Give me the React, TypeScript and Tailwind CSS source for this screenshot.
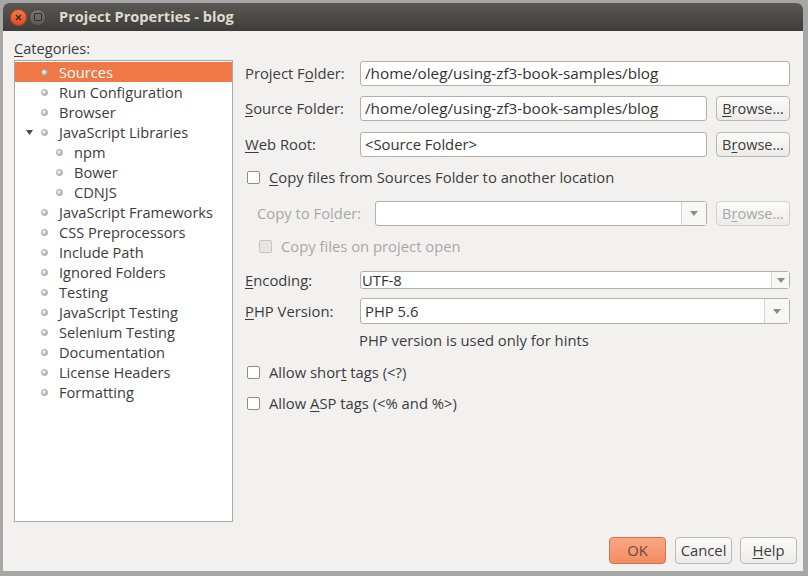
import React from 'react'

const font = { fontFamily: '"Open Sans", "DejaVu Sans", sans-serif' }

function Bullet() {
  return <span className="inline-block w-[7px] h-[7px] rounded-full bg-[radial-gradient(circle_at_35%_35%,#ffffff,#b5b5b5_70%,#959595)] border border-[#a3a3a3]" />
}

interface Cat {
  label: string
  level: number
  expander?: boolean
  selected?: boolean
}

const cats: Cat[] = [
  { label: 'Sources', level: 1, selected: true },
  { label: 'Run Configuration', level: 1 },
  { label: 'Browser', level: 1 },
  { label: 'JavaScript Libraries', level: 1, expander: true },
  { label: 'npm', level: 2 },
  { label: 'Bower', level: 2 },
  { label: 'CDNJS', level: 2 },
  { label: 'JavaScript Frameworks', level: 1 },
  { label: 'CSS Preprocessors', level: 1 },
  { label: 'Include Path', level: 1 },
  { label: 'Ignored Folders', level: 1 },
  { label: 'Testing', level: 1 },
  { label: 'JavaScript Testing', level: 1 },
  { label: 'Selenium Testing', level: 1 },
  { label: 'Documentation', level: 1 },
  { label: 'License Headers', level: 1 },
  { label: 'Formatting', level: 1 },
]

function U({ children }: { children: React.ReactNode }) {
  return <span className="underline underline-offset-2">{children}</span>
}

function BrowseBtn({ disabled, mn }: { disabled?: boolean; mn: 'B' | 'r' }) {
  return (
    <button
      className={
        'w-[74px] h-[25px] ml-[9px] rounded-[4px] border bg-gradient-to-b from-[#fbfbfa] to-[#ecebe9] text-[14.5px] ' +
        (disabled ? 'border-[#d3d0cc] text-[#a9a7a4]' : 'border-[#b9b6b1] text-[#3c3c3c]')
      }
    >
      {mn === 'B' ? (
        <><U>B</U>rowse...</>
      ) : (
        <>B<U>r</U>owse...</>
      )}
    </button>
  )
}

function Check({ disabled }: { disabled?: boolean }) {
  return (
    <span
      className={
        'inline-block w-[13px] h-[13px] rounded-[2px] border ' +
        (disabled ? 'bg-[#e6e5e3] border-[#c6c4c0]' : 'bg-white border-[#8e8c88]')
      }
    />
  )
}

function Arrow() {
  return (
    <svg width="8" height="5" viewBox="0 0 8 5">
      <path d="M0 0h8L4 5z" fill="#8a8a8a" />
    </svg>
  )
}

export default function App() {
  return (
    <div className="w-[808px] h-[576px] bg-[#a6a6a6] pt-[3px] overflow-hidden" style={font}>
      <div className="ml-[3px] w-[800px] h-[568px] flex flex-col bg-[#f2f1f0] rounded-t-[6px] overflow-hidden">
        {/* title bar */}
        <div className="h-[28px] flex items-center bg-gradient-to-b from-[#5a5852] to-[#3e3d39] shrink-0">
          <div className="ml-[7px] w-[17px] h-[17px] rounded-full bg-gradient-to-b from-[#f4774a] to-[#df4b18] border border-[#b3451f] flex items-center justify-center">
            <svg width="7" height="7" viewBox="0 0 7 7">
              <path d="M1 1l5 5M6 1L1 6" stroke="#3a2a22" strokeWidth="1.4" />
            </svg>
          </div>
          <div className="ml-[2px] w-[17px] h-[17px] rounded-full bg-gradient-to-b from-[#7a7874] to-[#5b5a56] border border-[#454440] flex items-center justify-center">
            <span className="w-[8px] h-[8px] border border-[#2f2e2b] rounded-[1px]" />
          </div>
          <div className="ml-[13px] text-[14.6px] font-bold text-[#dfdbd2]">Project Properties - blog</div>
        </div>

        {/* body */}
        <div className="flex pl-[11px] pr-[13px]">
          {/* left */}
          <div className="w-[219px] shrink-0">
            <div className="mt-[8px] h-[18px] leading-[18px] text-[14.6px] text-[#3c3c3c]">
              <U>C</U>ategories:
            </div>
            <div className="mt-[3px] h-[462px] bg-white border border-[#a9a9a9] pt-[1px]">
              {cats.map(c => (
                <div
                  key={c.label}
                  className={
                    'h-[20px] flex items-center text-[14.6px] ' +
                    (c.selected ? 'bg-[#f07746] text-white' : 'text-[#3c3c3c]')
                  }
                >
                  <span className="w-[26px] shrink-0 flex justify-end pr-[8px]">
                    {c.expander && (
                      <svg width="7" height="5" viewBox="0 0 7 5">
                        <path d="M0 0h7L3.5 5z" fill="#4a4a4a" />
                      </svg>
                    )}
                  </span>
                  <span className={(c.level === 2 ? 'ml-[15px]' : 'ml-[0px]') + ' flex items-center'}>
                    <Bullet />
                  </span>
                  <span className="ml-[11px] leading-[20px]">{c.label}</span>
                </div>
              ))}
            </div>
          </div>

          {/* right */}
          <div className="ml-[12px] flex-1 text-[14.8px] text-[#3c3c3c]">
            <div className="mt-[30px] flex items-center h-[25px]">
              <div className="w-[115px]">Project F<U>o</U>lder:</div>
              <div className="flex-1 h-[25px] bg-white border border-[#b3afa9] rounded-[3px] px-[4px] leading-[23px] text-[#333] text-[15.3px]">
                /home/oleg/using-zf3-book-samples/blog
              </div>
            </div>
            <div className="mt-[10px] flex items-center h-[25px]">
              <div className="w-[115px]"><U>S</U>ource Folder:</div>
              <div className="flex-1 h-[25px] bg-white border border-[#b3afa9] rounded-[3px] px-[4px] leading-[23px] text-[#333] text-[15.3px]">
                /home/oleg/using-zf3-book-samples/blog
              </div>
              <BrowseBtn mn="B" />
            </div>
            <div className="mt-[11px] flex items-center h-[25px]">
              <div className="w-[115px]"><U>W</U>eb Root:</div>
              <div className="flex-1 h-[25px] bg-white border border-[#b3afa9] rounded-[3px] px-[4px] leading-[23px] text-[#333]">
                &lt;Source Folder&gt;
              </div>
              <BrowseBtn mn="r" />
            </div>
            <div className="mt-[10px] flex items-center h-[20px] pl-[2px]">
              <Check />
              <span className="ml-[9px]"><U>C</U>opy files from Sources Folder to another location</span>
            </div>
            <div className="mt-[14px] flex items-center h-[25px] text-[#a9a7a4]">
              <div className="w-[130px] pl-[12px]">Copy to Fo<U>l</U>der:</div>
              <div className="flex-1 h-[25px] flex bg-white border border-[#b3afa9] rounded-[3px]">
                <div className="flex-1" />
                <div className="w-[25px] border-l border-[#d6d3cf] bg-[#f7f7f6] flex items-center justify-center">
                  <Arrow />
                </div>
              </div>
              <BrowseBtn mn="r" disabled />
            </div>
            <div className="mt-[10px] flex items-center h-[20px] pl-[14px] text-[#a9a7a4]">
              <Check disabled />
              <span className="ml-[9px]">Copy files on project open</span>
            </div>
            <div className="mt-[15px] flex items-center h-[18px]">
              <div className="w-[115px]"><U>E</U>ncoding:</div>
              <div className="flex-1 h-[18px] flex bg-white border border-[#b3afa9] rounded-[3px]">
                <div className="flex-1 pl-[1px] leading-[16px] text-[#333]">UTF-8</div>
                <div className="w-[18px] border-l border-[#d6d3cf] bg-[#f7f7f6] flex items-center justify-center">
                  <Arrow />
                </div>
              </div>
            </div>
            <div className="mt-[9px] flex items-center h-[26px]">
              <div className="w-[115px]"><U>P</U>HP Version:</div>
              <div className="flex-1 h-[26px] flex bg-white border border-[#b3afa9] rounded-[3px]">
                <div className="flex-1 pl-[4px] leading-[24px] text-[#333]">PHP 5.6</div>
                <div className="w-[25px] border-l border-[#d6d3cf] bg-[#f7f7f6] flex items-center justify-center">
                  <Arrow />
                </div>
              </div>
            </div>
            <div className="mt-[6px] h-[20px] leading-[20px] pl-[114px]">PHP version is used only for hints</div>
            <div className="mt-[12px] flex items-center h-[20px] pl-[2px]">
              <Check />
              <span className="ml-[9px]">Allow shor<U>t</U> tags (&lt;?)</span>
            </div>
            <div className="mt-[11px] flex items-center h-[20px] pl-[2px]">
              <Check />
              <span className="ml-[9px]">Allow <U>A</U>SP tags (&lt;% and %&gt;)</span>
            </div>
          </div>
        </div>

        {/* buttons */}
        <div className="mt-[15px] flex justify-end pr-[6px] text-[14.8px]">
          <button className="w-[57px] h-[27px] rounded-[4px] border border-[#d4734c] bg-gradient-to-b from-[#f9a784] to-[#f28c62] text-[#6b4a3e]">
            OK
          </button>
          <button className="ml-[9px] w-[57px] h-[27px] rounded-[4px] border border-[#bdb9b3] bg-gradient-to-b from-[#fbfbfa] to-[#ecebe9] text-[#3c3c3c]">
            Cancel
          </button>
          <button className="ml-[8px] w-[57px] h-[27px] rounded-[4px] border border-[#bdb9b3] bg-gradient-to-b from-[#fbfbfa] to-[#ecebe9] text-[#3c3c3c]">
            <U>H</U>elp
          </button>
        </div>
      </div>
    </div>
  )
}
